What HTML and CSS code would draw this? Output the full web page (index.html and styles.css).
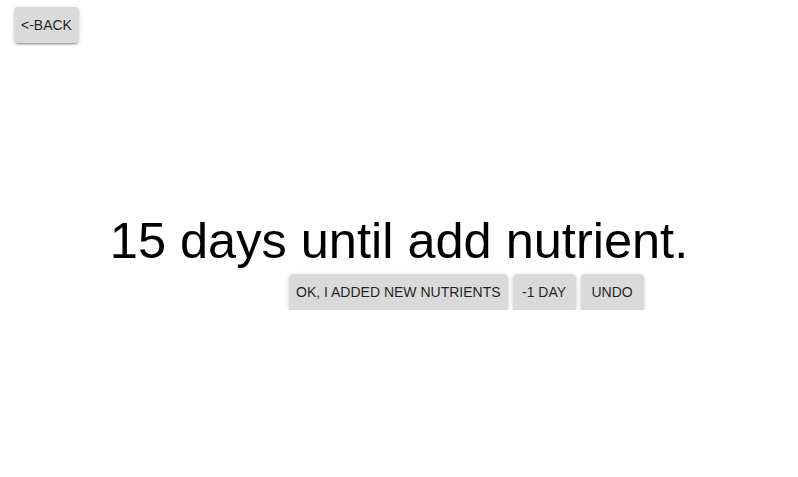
FILE: index.html
```html
<!DOCTYPE html>
<html>
<head>
<meta charset="utf-8">
<link rel="stylesheet" href="styles.css">
</head>
<body>
<header class="top">
  <button class="btn">&lt;-BACK</button>
</header>
<main class="main">
  <h1 class="title">15 days until add nutrient.</h1>
  <div class="actions">
    <button class="btn">OK, I ADDED NEW NUTRIENTS</button>
    <button class="btn">-1 DAY</button>
    <button class="btn">UNDO</button>
  </div>
</main>
</body>
</html>
```
FILE: styles.css
```css
html, body {
  margin: 0;
  padding: 0;
  background: #ffffff;
  font-family: "Liberation Sans", Arial, sans-serif;
}
.top {
  padding: 7px 14px 0;
  display: flex;
}
.btn {
  font-family: "Liberation Sans", Arial, sans-serif;
  font-size: 14px;
  color: rgba(0, 0, 0, 0.87);
  background: #dadada;
  border: none;
  border-radius: 4px;
  height: 36px;
  min-width: 63px;
  padding: 0 7px;
  box-shadow: 0px 3px 1px -2px rgba(0,0,0,0.2), 0px 2px 2px 0px rgba(0,0,0,0.14), 0px 1px 5px 0px rgba(0,0,0,0.12);
  cursor: pointer;
}
.main {
  padding-top: 169px;
  display: flex;
  flex-direction: column;
}
.title {
  margin: 0;
  font-size: 50.5px;
  font-weight: normal;
  text-align: center;
  color: #000;
  line-height: 57px;
}
.actions {
  display: flex;
  gap: 5px;
  margin-top: 5px;
  padding-left: 289px;
}
```
